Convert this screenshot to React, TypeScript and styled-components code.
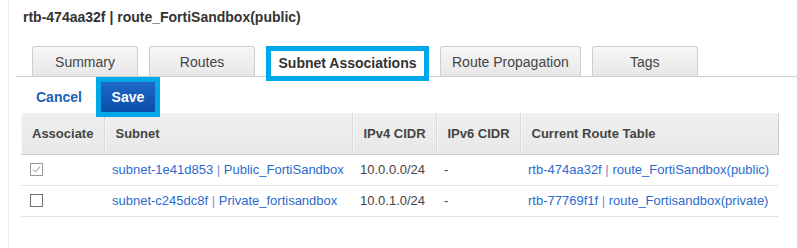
import React from "react";
import styled, { createGlobalStyle } from "styled-components";

const Global = createGlobalStyle`
  html, body { margin: 0; padding: 0; background: #fff; }
  body { font-family: "Liberation Sans", Arial, sans-serif; color: #444; }
`;

const Panel = styled.div`
  margin-left: 8px;
  border-left: 1px solid #efefef;
  height: 248px;
  box-sizing: border-box;
  overflow: hidden;
`;

const Title = styled.h1`
  margin: 0;
  padding: 7px 0 0 14px;
  font-size: 14px;
  line-height: 20px;
  font-weight: bold;
  color: #333;
`;

const TabBar = styled.div`
  display: flex;
  align-items: flex-start;
  gap: 11px;
  margin: 19px 0 0 7px;
  padding-left: 16px;
  border-bottom: 1px solid #cfcfcf;
  height: 30px;
`;

const Tab = styled.div<{ $active?: boolean }>`
  box-sizing: border-box;
  min-width: 106px;
  padding: 0 11px;
  font-size: 14px;
  text-align: center;
  white-space: nowrap;
  flex-shrink: 0;
  ${(p) =>
    p.$active
      ? `
    height: 35px;
    margin-bottom: -5px;
    border: 5px solid #00a8ea;
    background: #fff;
    font-weight: bold;
    color: #333;
    line-height: 25px;
    padding: 0;
    width: 163px;
  `
      : `
    height: 30px;
    border: 1px solid #cdcdcd;
    border-bottom: none;
    border-radius: 3px 3px 0 0;
    background: linear-gradient(#f7f7f7, #e7e7e7);
    color: #444;
    line-height: 30px;
  `}
`;

const ActionRow = styled.div`
  display: flex;
  align-items: center;
  padding: 5px 0 0 27px;
  height: 30px;
`;

const CancelLink = styled.span`
  font-size: 14px;
  font-weight: bold;
  color: #1b5fb8;
  margin-right: 19px;
`;

const SaveButton = styled.button`
  box-sizing: border-box;
  width: 54px;
  height: 30px;
  border: none;
  padding: 0;
  background: linear-gradient(#1e68c8, #0b4fa9);
  color: #fff;
  font-family: "Liberation Sans", Arial, sans-serif;
  font-size: 14px;
  font-weight: bold;
  outline: 5px solid #00a8ea;
  outline-offset: 0;
  position: relative;
  z-index: 1;
`;

const Table = styled.table`
  margin: 1px 0 0 12px;
  width: 757px;
  border-collapse: collapse;
  table-layout: fixed;
  font-size: 13px;
`;

const HeadCell = styled.th<{ $w: number }>`
  width: ${(p) => p.$w}px;
  height: 41px;
  padding: 0 0 0 11px;
  text-align: left;
  font-size: 13px;
  font-weight: bold;
  color: #444;
  background: linear-gradient(#efefef, #e8e8e8);
  border-bottom: 1px solid #cdcdcd;
  border-right: 1px solid #d9d9d9;
  box-shadow: inset 1px 0 0 #f8f8f8;
  box-sizing: border-box;
  &:last-child { border-right: 1px solid #cfcfcf; }
`;

const Cell = styled.td`
  height: 31px;
  padding: 0 0 0 8px;
  border-bottom: 1px solid #e2e2e2;
  color: #444;
  white-space: nowrap;
  box-sizing: border-box;
`;

const CheckCell = styled(Cell)`
  padding-left: 9px;
`;

const Link = styled.span`
  color: #2a6bd0;
`;

const Sep = styled.span`
  color: #8a8ad8;
`;

const Box = styled.span<{ $checked?: boolean }>`
  display: inline-flex;
  align-items: center;
  justify-content: center;
  width: 13px;
  height: 13px;
  box-sizing: border-box;
  border: 1px solid ${(p) => (p.$checked ? "#9a9a9a" : "#707070")};
  background: #fff;
  vertical-align: middle;
  margin-top: -2px;
`;

const rows = [
  {
    checked: true,
    subnetId: "subnet-1e41d853",
    subnetName: "Public_FortiSandbox",
    v4: "10.0.0.0/24",
    v6: "-",
    rtId: "rtb-474aa32f",
    rtName: "route_FortiSandbox(public)",
  },
  {
    checked: false,
    subnetId: "subnet-c245dc8f",
    subnetName: "Private_fortisandbox",
    v4: "10.0.1.0/24",
    v6: "-",
    rtId: "rtb-77769f1f",
    rtName: "route_Fortisandbox(private)",
  },
];

const tabs = ["Summary", "Routes", "Subnet Associations", "Route Propagation", "Tags"];

export default function App() {
  return (
    <>
      <Global />
      <Panel>
        <Title>rtb-474aa32f | route_FortiSandbox(public)</Title>
        <TabBar>
          {tabs.map((t) => (
            <Tab key={t} $active={t === "Subnet Associations"}>
              {t}
            </Tab>
          ))}
        </TabBar>
        <ActionRow>
          <CancelLink>Cancel</CancelLink>
          <SaveButton>Save</SaveButton>
        </ActionRow>
        <Table>
          <thead>
            <tr>
              <HeadCell $w={83}>Associate</HeadCell>
              <HeadCell $w={248}>Subnet</HeadCell>
              <HeadCell $w={84}>IPv4 CIDR</HeadCell>
              <HeadCell $w={84}>IPv6 CIDR</HeadCell>
              <HeadCell $w={258}>Current Route Table</HeadCell>
            </tr>
          </thead>
          <tbody>
            {rows.map((r) => (
              <tr key={r.subnetId}>
                <CheckCell>
                  <Box $checked={r.checked}>
                    {r.checked && (
                      <svg width="11" height="11" viewBox="0 0 11 11">
                        <path d="M2 5.5 L4.5 8 L9 2.5" fill="none" stroke="#a09080" strokeWidth="1" />
                      </svg>
                    )}
                  </Box>
                </CheckCell>
                <Cell>
                  <Link>
                    {r.subnetId} <Sep>|</Sep> {r.subnetName}
                  </Link>
                </Cell>
                <Cell>{r.v4}</Cell>
                <Cell>{r.v6}</Cell>
                <Cell>
                  <Link>
                    {r.rtId} <Sep>|</Sep> {r.rtName}
                  </Link>
                </Cell>
              </tr>
            ))}
          </tbody>
        </Table>
      </Panel>
    </>
  );
}
